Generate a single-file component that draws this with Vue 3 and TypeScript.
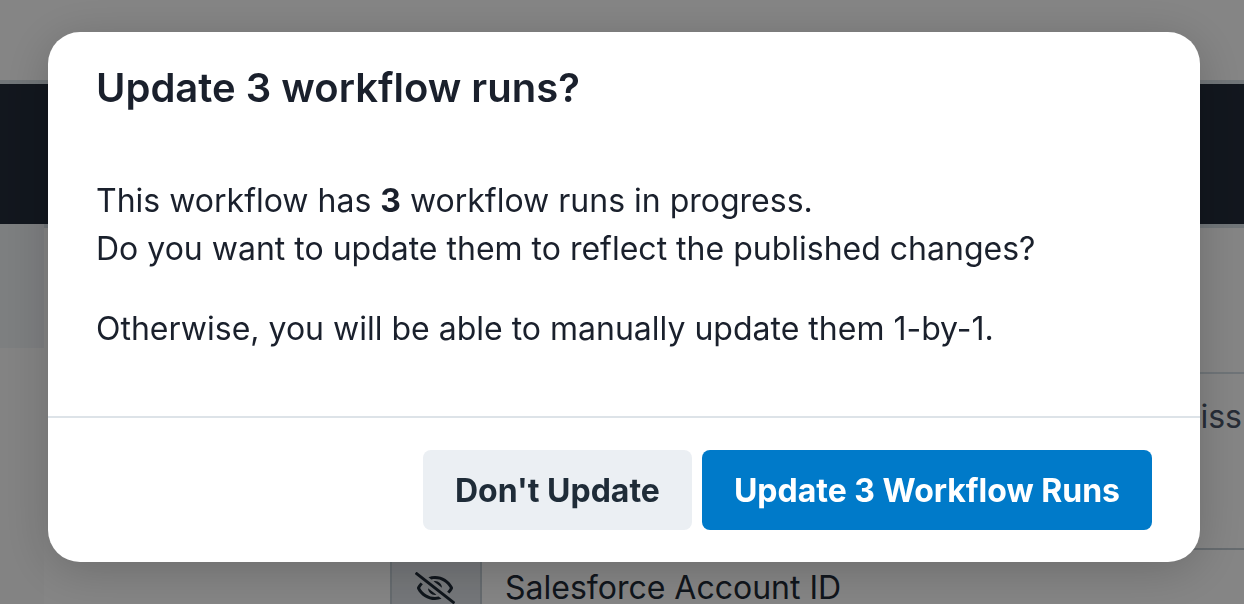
<script setup lang="ts">
import { ref } from 'vue'

const runs = ref(3)
const open = ref(true)
const field = 'Salesforce Account ID'

function close(): void {
  open.value = false
}
</script>

<template>
  <div class="app">
    <div class="page" :inert="open">
      <header class="topbar"></header>
      <nav class="band"></nav>
      <div class="columns">
        <aside class="sidebar"><div class="selected"></div></aside>
        <main class="content">
          <section class="blank"></section>
          <section class="hint">iss</section>
          <div class="field">
            <span class="visibility">
              <svg viewBox="0 0 640 512" width="40" height="32" fill="currentColor" aria-hidden="true">
                <path d="M634 471L36 3.510A16 16 0 0 0 13.510 6l-10 12.490A16 16 0 0 0 6 41l598 467.490a16 16 0 0 0 22.490-2.490l10-12.490A16 16 0 0 0 634 471z" />
                <path d="M296.790 146.470l134.790 105.380C429.360 191.910 380.480 144 320 144a112.260 112.260 0 0 0-23.210 2.470zm46.420 219.070L208.420 260.160C210.650 320.090 259.530 368 320 368a113 113 0 0 0 23.210-2.460z" />
                <path d="M320 112c98.650 0 189.090 55 237.930 144a285.530 285.530 0 0 1-44 60.200l37.740 29.500a333.700 333.700 0 0 0 52.900-75.110 32.350 32.350 0 0 0 0-29.190C550.290 135.590 442.930 64 320 64c-36.700 0-71.710 7-104.630 18.810l46.410 36.290c18.940-4.300 38.340-7.100 58.220-7.100z" />
                <path d="M320 400c-98.650 0-189.080-55-237.930-144a285.470 285.470 0 0 1 44.050-60.190l-37.740-29.500a333.600 333.600 0 0 0-52.890 75.100 32.350 32.350 0 0 0 0 29.190C89.720 376.410 197.080 448 320 448c36.700 0 71.710-7.050 104.630-18.810l-46.410-36.280C359.280 397.200 339.890 400 320 400z" />
              </svg>
            </span>
            <span class="field-name">{{ field }}</span>
          </div>
        </main>
      </div>
    </div>

    <div v-if="open" class="overlay">
      <div class="modal" role="dialog" aria-modal="true" aria-labelledby="modal-title">
        <div class="body">
          <h1 id="modal-title">Update {{ runs }} workflow runs?</h1>
          <p>
            This workflow has <strong>{{ runs }}</strong> workflow runs in progress.<br />
            Do you want to update them to reflect the published changes?
          </p>
          <p>Otherwise, you will be able to manually update them 1-by-1.</p>
        </div>
        <footer class="actions">
          <button type="button" class="secondary" @click="close">Don't Update</button>
          <button type="button" class="primary" @click="close">Update {{ runs }} Workflow Runs</button>
        </footer>
      </div>
    </div>
  </div>
</template>

<style>
html,
body,
#app {
  height: 100%;
}
</style>

<style scoped>
.app {
  height: 100%;
  overflow: hidden;
  background: #ffffff;
  color: #1a202c;
  font-family: Inter, "Liberation Sans", sans-serif;
  font-size: 32px;
  line-height: 48px;
}

.page {
  display: flex;
  flex-direction: column;
  height: 100%;
}

.topbar {
  flex: none;
  height: 80px;
  border-bottom: 4px solid #d9e2e8;
}

.band {
  flex: none;
  height: 140px;
  background: #232c3a;
}

.columns {
  display: flex;
  flex: 1;
  min-height: 0;
}

.sidebar {
  flex: none;
  width: 44px;
  background: #fcfcfc;
}

.selected {
  height: 124px;
  background: #f0f3f6;
}

.content {
  flex: 1;
  min-width: 0;
  overflow: hidden;
  border-top: 4px solid #d9e2e8;
}

.blank {
  height: 144px;
  margin-left: 48px;
  border-bottom: 2px solid #d5dfe6;
}

.hint {
  height: 155px;
  padding: 19px 2px 0;
  color: #4a5568;
  text-align: right;
}

.field {
  display: flex;
  align-items: center;
  height: 76px;
  margin-left: 346px;
  border: 2px solid #c3cdd4;
  border-right: 0;
  color: #1f2a36;
}

.visibility {
  display: flex;
  align-items: center;
  justify-content: center;
  width: 86px;
  height: 100%;
  padding-right: 2px;
  background: #e0e4e9;
  border-right: 2px solid #c3cdd4;
}

.field-name {
  padding-left: 23px;
  line-height: 28px;
}

.overlay {
  position: fixed;
  inset: 0;
  display: flex;
  flex-direction: column;
  padding: 32px 44px 32px 48px;
  background: rgba(0, 0, 0, 0.48);
}

.modal {
  border-radius: 32px;
  background: #ffffff;
  box-shadow: 0 8px 48px rgba(0, 0, 0, 0.2);
}

.body {
  padding: 32px 48px 63px;
}

h1 {
  margin: 0 0 65px;
  font-size: 40px;
  font-weight: 600;
  line-height: 48px;
}

p {
  margin: 0;
}

p + p {
  margin-top: 32px;
}

strong {
  font-weight: 700;
}

.actions {
  display: flex;
  justify-content: flex-end;
  gap: 10px;
  padding: 32px 48px;
  border-top: 2px solid #dde3e8;
}

button {
  height: 80px;
  padding: 2px 32px 0;
  border: 0;
  border-radius: 8px;
  font: inherit;
  font-weight: 700;
  cursor: pointer;
}

.secondary {
  background: #ebeff3;
  color: #1f2c38;
}

.primary {
  background: #007ac9;
  color: #ffffff;
}
</style>
